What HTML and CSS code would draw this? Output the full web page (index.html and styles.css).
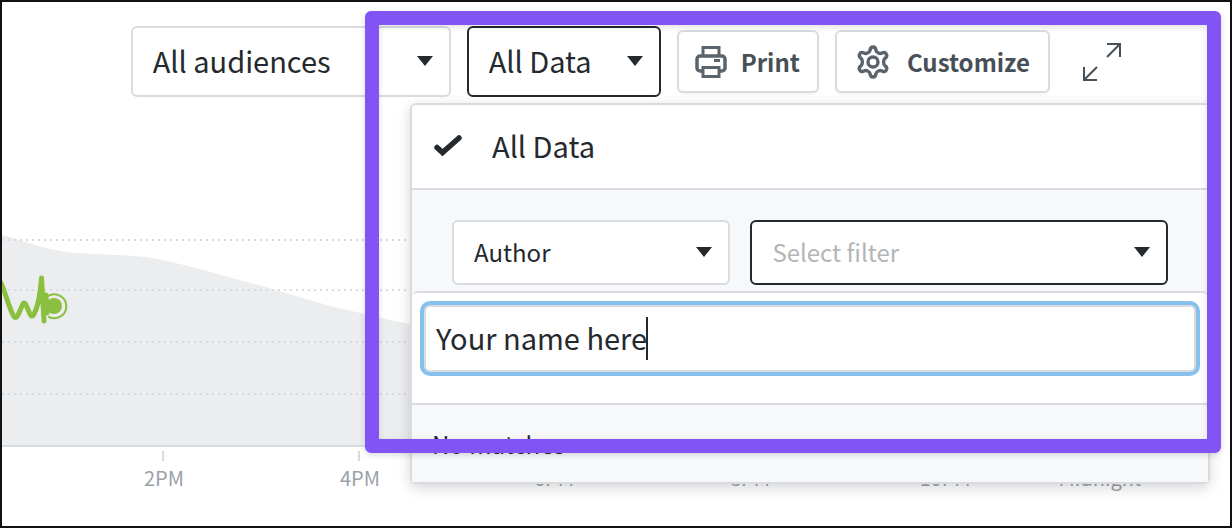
FILE: index.html
```html
<!DOCTYPE html>
<html lang="en">

<head>
    <meta charset="utf-8">
    <title>Dashboard</title>
    <link rel="stylesheet" href="styles.css">
</head>

<body>
    <div class="page">
        <div class="toolbar">
            <div class="select audiences">
                <select aria-label="Audience">
                    <option>All audiences</option>
                </select>
            </div>
            <div class="select data active">
                <select aria-label="Data">
                    <option>All Data</option>
                </select>
            </div>
            <button class="btn print" type="button">
                <svg width="32" height="32" viewBox="0 0 32 32" fill="none" stroke="#5b636c" stroke-width="3.5">
                    <path d="M8 10V1.500h16V10" stroke-width="3" />
                    <path d="M8 25H5a3 3 0 0 1-3-3V13a3 3 0 0 1 3-3h22a3 3 0 0 1 3 3v9a3 3 0 0 1-3 3h-3" />
                    <path d="M8 21.500h16v9H8z" stroke-width="3" />
                    <path d="M19 14.500h6" stroke-width="3" />
                </svg>
                Print
            </button>
            <button class="btn customize" type="button">
                <svg width="34" height="34" viewBox="0 0 34 34" fill="none" stroke="#5b636c" stroke-width="3.4" stroke-linejoin="round">
                    <path d="M14 5.5Q14.4 2 17 2T20 5.5Q20.5 7.2 22.5 8Q24.3 9 26 8Q29 6.5 30.2 8.8Q31.8 11.5 29 13.3Q27.6 14.7 27.6 17T29 20.7Q31.8 22.5 30.2 25.2Q29 27.5 26 26Q24.3 25 22.5 26Q20.5 26.8 20 28.5Q19.6 32 17 32T14 28.5Q13.5 26.8 11.5 26Q9.7 25 8 26Q5 27.5 3.8 25.2Q2.2 22.5 5 20.7Q6.4 19.3 6.4 17T5 13.3Q2.2 11.5 3.8 8.8Q5 6.5 8 8Q9.7 9 11.5 8Q13.5 7.2 14 5.5Z" />
                    <circle cx="17" cy="17" r="5" />
                </svg>
                Customize
            </button>
            <button class="expand" type="button" aria-label="Expand">
                <svg width="40" height="40" viewBox="0 0 40 40" fill="none" stroke="#474f57" stroke-width="2">
                    <path d="M25 2h13v13M38 2L25 15M2 25v13h13M2 38l13-13" />
                </svg>
            </button>
        </div>

        <svg class="chart">
            <path fill="#ecedef" d="M0 35C20 40 40 49 64 52C90 55 115 54 138 56.500C150 57.500 165 61 180 64.500C210 72 235 79.500 260 86C290 94 320 105 350 111C370 115.500 390 121 408 124C620 160 900 190 1200 200V246H0Z" />
            <g class="grid">
                <line x1="0" x2="100%" y1="40" y2="40" />
                <line x1="0" x2="100%" y1="90" y2="90" />
                <line x1="0" x2="100%" y1="142" y2="142" />
                <line x1="0" x2="100%" y1="194" y2="194" />
            </g>
            <g class="axis">
                <line x1="0" x2="100%" y1="246" y2="246" />
                <path d="M161 251v10M357 251v10M552 251v10M748 251v10M943 251v10M1139 251v10" />
            </g>
            <g class="ticks">
                <text x="162" y="286">2PM</text>
                <text x="358" y="286">4PM</text>
                <text x="552" y="286">6PM</text>
                <text x="748" y="286">8PM</text>
                <text x="943" y="286">10PM</text>
                <text x="1098" y="286">Midnight</text>
            </g>
            <g fill="none" stroke="#8bbf3f" stroke-linecap="round" stroke-linejoin="round">
                <path stroke-width="5" d="M-1 83C3 91 6 105 11 115Q13.500 120 16 115L20 106Q22 100 24.500 106L27.500 113Q30 119 32.500 113C37 104 38.500 92 39.500 78L42 121" />
                <path stroke-width="5" d="M44 95l1 18" />
                <path stroke-width="2" d="M47 95.500A12 12 0 1 1 47 117" />
                <circle cx="52" cy="106" r="8" fill="#8bbf3f" stroke="none" />
            </g>
        </svg>

        <!-- open menu of the data select -->
        <div class="menu">
            <div class="option">
                <svg width="28" height="22" viewBox="0 0 28 22" fill="none" stroke="#24292e" stroke-width="5.500">
                    <path d="M3 12.500l5.500 5L25 3" stroke-linecap="round" />
                </svg>
                <span>All Data</span>
            </div>
            <div class="filters">
                <div class="select field">
                    <select aria-label="Field">
                        <option>Author</option>
                    </select>
                </div>
                <div class="select value active">
                    <select aria-label="Filter">
                        <option>Select filter</option>
                    </select>
                </div>
            </div>
            <div class="results">
                <div class="search">
                    <input type="text" aria-label="Search filters" value="Your name here">
                    <span class="caret"></span>
                </div>
                <div class="empty">No matches</div>
            </div>
        </div>

        <div class="highlight"></div>
    </div>
</body>

</html>
```

FILE: styles.css
```css
* {
    box-sizing: border-box;
}

body {
    margin: 0;
    font-family: "Noto Sans CJK SC", "Open Sans", sans-serif;
    font-size: 29px;
    color: #24292e;
}

.page {
    position: relative;
    min-height: 100vh;
    padding-top: 24px;
    border: 2px solid #111;
    background: #fff;
    overflow: hidden;
}

button,
input,
select {
    font: inherit;
    color: inherit;
}

.toolbar {
    display: flex;
    justify-content: flex-end;
    align-items: center;
    gap: 16px;
    padding-right: 108px;
}

/* select and its arrow share one grid cell */
.select {
    display: grid;
    align-items: center;
}

.select select {
    grid-area: 1 / 1;
    width: 100%;
    height: 71px;
    padding: 0 20px 4px;
    border: 2px solid #d8dce1;
    border-radius: 6px;
    background: #fff;
    appearance: none;
}

.select::after {
    content: "";
    grid-area: 1 / 1;
    justify-self: end;
    margin: 0 18px 2px 0;
    border: 8px solid transparent;
    border-top: 10px solid #24292e;
    border-bottom: 0;
    pointer-events: none;
}

.select.active select {
    border-color: #24292e;
}

.audiences {
    width: 320px;
}

.data {
    width: 194px;
}

.btn {
    display: flex;
    align-items: center;
    height: 63px;
    border: 2px solid #d8dce1;
    border-radius: 6px;
    background: #fff;
    box-shadow: 0 2px 2px rgba(0, 0, 0, 0.04);
    font-size: 24px;
    font-weight: 600;
    color: #474f57;
}

.print {
    gap: 14px;
    padding: 0 17px 0 16px;
}

.customize {
    gap: 17px;
    padding: 0 18px 0 19px;
}

.expand {
    display: flex;
    margin-left: 16px;
    padding: 0;
    border: 0;
    background: none;
}

.chart {
    display: block;
    width: calc(100% - 28px);
    height: 300px;
    margin-top: 103px;
}

.grid line {
    stroke: #d8dbdf;
    stroke-width: 2;
    stroke-dasharray: 2 4;
}

.axis {
    fill: none;
    stroke: #d8dce1;
    stroke-width: 2;
}

.ticks {
    font-size: 20px;
    fill: #9aa1a9;
    text-anchor: middle;
}

.menu {
    position: absolute;
    top: 101px;
    right: 20px;
    width: 800px;
    border: 2px solid #d8dce1;
    border-radius: 6px;
    background: #f6f8fa;
    box-shadow: 0 4px 14px rgba(0, 0, 0, 0.16);
}

.option {
    display: flex;
    align-items: center;
    gap: 30px;
    height: 85px;
    padding: 0 22px 2px;
    border-bottom: 2px solid #d8dce1;
    border-radius: 4px 4px 0 0;
    background: #fff;
}

.option span {
    padding-bottom: 2px;
}

.filters {
    display: flex;
    gap: 20px;
    padding: 30px 40px 6px;
    font-size: 24px;
}

.filters select {
    height: 65px;
    padding-bottom: 2px;
}

.field {
    flex: 2;
}

.value {
    flex: 3;
}

.value select {
    color: #b3b5b7;
}

.results {
    border-top: 2px solid #d8dce1;
    border-radius: 6px;
    background: #fff;
}

.search {
    position: relative;
    padding: 12px 12px 31px;
    border-bottom: 2px solid #d8dce1;
}

.search input {
    display: block;
    width: 100%;
    height: 67px;
    padding: 0 10px 4px;
    border: 2px solid #d8dce1;
    border-radius: 6px;
    outline: none;
    box-shadow: 0 0 0 4px #86c1ee;
}

.caret {
    position: absolute;
    top: 24px;
    left: 234px;
    width: 2px;
    height: 43px;
    background: #24292e;
}

.empty {
    padding: 0 20px;
    line-height: 77px;
    font-size: 24px;
    background: #f6f8fa;
}

/* marker drawn around the open menu */
.highlight {
    position: absolute;
    top: 9px;
    right: 9px;
    width: 856px;
    height: 442px;
    border: 14px solid #8254f5;
    border-radius: 6px;
    box-shadow: 0 2px 6px rgba(0, 0, 0, 0.15), inset 0 2px 6px rgba(0, 0, 0, 0.12);
    pointer-events: none;
}
```
